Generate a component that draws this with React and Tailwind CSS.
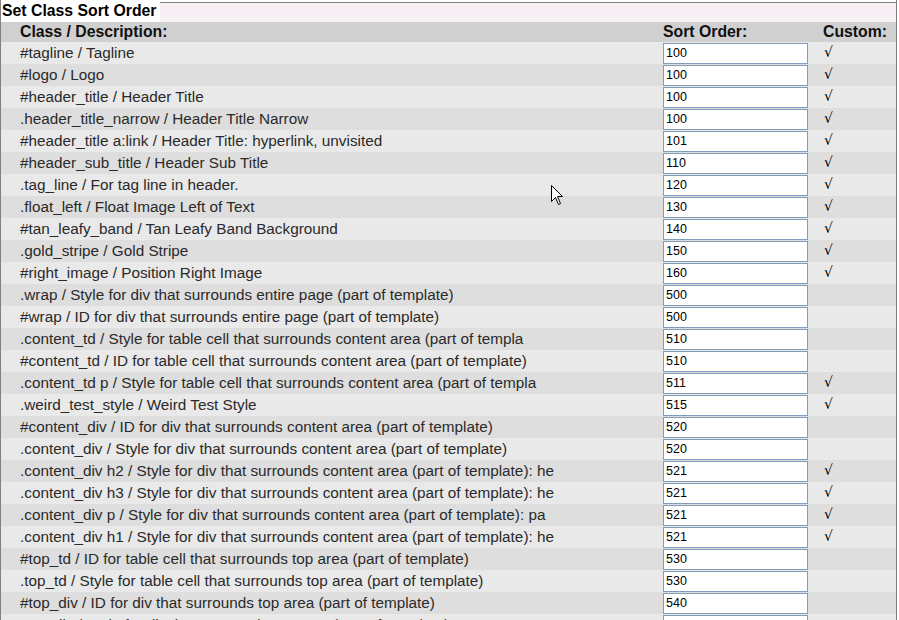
import React from "react";

const rows = [
  ["#tagline / Tagline", "100", true],
  ["#logo / Logo", "100", true],
  ["#header_title / Header Title", "100", true],
  [".header_title_narrow / Header Title Narrow", "100", true],
  ["#header_title a:link / Header Title: hyperlink, unvisited", "101", true],
  ["#header_sub_title / Header Sub Title", "110", true],
  [".tag_line / For tag line in header.", "120", true],
  [".float_left / Float Image Left of Text", "130", true],
  ["#tan_leafy_band / Tan Leafy Band Background", "140", true],
  [".gold_stripe / Gold Stripe", "150", true],
  ["#right_image / Position Right Image", "160", true],
  [".wrap / Style for div that surrounds entire page (part of template)", "500", false],
  ["#wrap / ID for div that surrounds entire page (part of template)", "500", false],
  [".content_td / Style for table cell that surrounds content area (part of templa", "510", false],
  ["#content_td / ID for table cell that surrounds content area (part of template)", "510", false],
  [".content_td p / Style for table cell that surrounds content area (part of templa", "511", true],
  [".weird_test_style / Weird Test Style", "515", true],
  ["#content_div / ID for div that surrounds content area (part of template)", "520", false],
  [".content_div / Style for div that surrounds content area (part of template)", "520", false],
  [".content_div h2 / Style for div that surrounds content area (part of template): he", "521", true],
  [".content_div h3 / Style for div that surrounds content area (part of template): he", "521", true],
  [".content_div p / Style for div that surrounds content area (part of template): pa", "521", true],
  [".content_div h1 / Style for div that surrounds content area (part of template): he", "521", true],
  ["#top_td / ID for table cell that surrounds top area (part of template)", "530", false],
  [".top_td / Style for table cell that surrounds top area (part of template)", "530", false],
  ["#top_div / ID for div that surrounds top area (part of template)", "540", false],
  [".top_div / Style for div that surrounds top area (part of template)", "540", false],
];

export default function App() {
  return (
    <div className="relative h-[620px] w-[899px] overflow-hidden bg-white font-['Liberation_Sans',Arial,sans-serif]">
      <div className="w-[897px] border-l border-r border-[#808080]">
        <div className="flex h-[22px]">
          <div className="bg-white pl-[1px] pr-[3px] text-[15.8px] font-bold leading-[22px] text-black">
            Set Class Sort Order
          </div>
          <div className="mt-[2px] h-[20px] flex-1 border-t border-[#808080] bg-[#f7f0f4]" />
        </div>
        <div className="flex h-[20px] bg-[#d0d0d0] text-[15.8px] font-bold leading-[20px] text-[#111]">
          <div className="w-[662px] pl-[19px]">Class / Description:</div>
          <div className="w-[160px]">Sort Order:</div>
          <div className="flex-1">Custom:</div>
        </div>
        {rows.map(([desc, val, custom], i) => (
          <div
            key={i}
            className={
              "flex h-[22px] text-[15.3px] leading-[22px] text-[#2a2a2a] " +
              (i % 2 === 0 ? "bg-[#e9e9e9]" : "bg-[#dedede]")
            }
          >
            <div className="w-[662px] overflow-hidden whitespace-nowrap pl-[19px]">{desc}</div>
            <div className="w-[160px] pt-[1px]">
              <div className="h-[21px] w-[145px] border border-[#7f9db9] bg-white pl-[2px] text-[12.5px] leading-[19px] text-black">
                {val}
              </div>
            </div>
            <div className="flex-1 pl-[1px] font-['DejaVu_Sans',sans-serif] text-[14px] leading-[20px] text-black">
              {custom ? "√" : ""}
            </div>
          </div>
        ))}
      </div>
      <svg
        className="absolute left-[551px] top-[185px]"
        width="14"
        height="22"
        viewBox="0 0 14 22"
      >
        <path
          d="M0.5 0.5 L0.5 16.5 L4.5 12.5 L7.5 19.5 L9.5 18.5 L6.5 11.5 L11.5 11.5 Z"
          fill="white"
          stroke="black"
          strokeWidth="1"
        />
      </svg>
    </div>
  );
}
